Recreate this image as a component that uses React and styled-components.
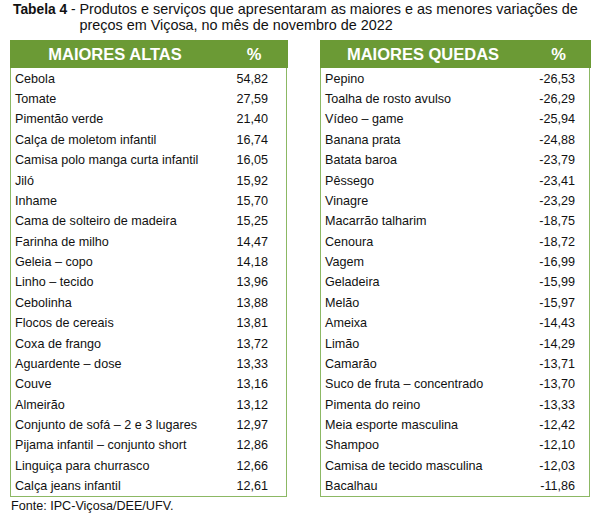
import React from 'react'
import styled, { createGlobalStyle } from 'styled-components'

const altas = [
  ['Cebola', '54,82'],
  ['Tomate', '27,59'],
  ['Pimentão verde', '21,40'],
  ['Calça de moletom infantil', '16,74'],
  ['Camisa polo manga curta infantil', '16,05'],
  ['Jiló', '15,92'],
  ['Inhame', '15,70'],
  ['Cama de solteiro de madeira', '15,25'],
  ['Farinha de milho', '14,47'],
  ['Geleia – copo', '14,18'],
  ['Linho – tecido', '13,96'],
  ['Cebolinha', '13,88'],
  ['Flocos de cereais', '13,81'],
  ['Coxa de frango', '13,72'],
  ['Aguardente – dose', '13,33'],
  ['Couve', '13,16'],
  ['Almeirão', '13,12'],
  ['Conjunto de sofá – 2 e 3 lugares', '12,97'],
  ['Pijama infantil – conjunto short', '12,86'],
  ['Linguiça para churrasco', '12,66'],
  ['Calça jeans infantil', '12,61']
]

const quedas = [
  ['Pepino', '-26,53'],
  ['Toalha de rosto avulso', '-26,29'],
  ['Vídeo – game', '-25,94'],
  ['Banana prata', '-24,88'],
  ['Batata baroa', '-23,79'],
  ['Pêssego', '-23,41'],
  ['Vinagre', '-23,29'],
  ['Macarrão talharim', '-18,75'],
  ['Cenoura', '-18,72'],
  ['Vagem', '-16,99'],
  ['Geladeira', '-15,99'],
  ['Melão', '-15,97'],
  ['Ameixa', '-14,43'],
  ['Limão', '-14,29'],
  ['Camarão', '-13,71'],
  ['Suco de fruta – concentrado', '-13,70'],
  ['Pimenta do reino', '-13,33'],
  ['Meia esporte masculina', '-12,42'],
  ['Shampoo', '-12,10'],
  ['Camisa de tecido masculina', '-12,03'],
  ['Bacalhau', '-11,86']
]

const GlobalStyle = createGlobalStyle`
  body {
    margin: 0;
    background: #ffffff;
    font-family: 'Liberation Sans', Arial, sans-serif;
    color: #000000;
  }
`

const Page = styled.div`
  width: 593px;
  height: 516px;
  padding: 2px 0 0 13px;
  box-sizing: border-box;
`

const Caption = styled.div`
  display: flex;
  align-items: baseline;
  font-size: 14.4px;
  line-height: 15.5px;
  color: #111;
  width: 578px;
`

const CaptionLabel = styled.span`
  white-space: pre;
  font-size: 13.8px;
  b {
    font-weight: 700;
  }
`

const Tables = styled.div`
  display: flex;
  margin-top: 7px;
  margin-left: -3px;
`

const Table = styled.div`
  width: ${p => p.$width}px;
  margin-left: ${p => p.$offset || 0}px;
  border: 1.5px solid #8cb864;
  border-top: none;
  box-sizing: border-box;
`

const Head = styled.div`
  display: grid;
  grid-template-columns: 1fr ${p => p.$col}px;
  height: 28px;
  align-items: center;
  background: #6b9a35;
  color: #ffffff;
  font-weight: 700;
  font-size: 16.5px;
  margin: 0 -1.5px;
  text-align: center;
`

const Row = styled.div`
  display: grid;
  grid-template-columns: 1fr ${p => p.$col}px;
  height: 20.38px;
  align-items: center;
  font-size: 12.6px;
  color: #111;
  padding-top: 1px;
  box-sizing: border-box;
`

const Name = styled.span`
  padding-left: 4px;
  white-space: nowrap;
`

const Value = styled.span`
  text-align: right;
  padding-right: ${p => p.$pad}px;
`

const Source = styled.div`
  font-size: 12.6px;
  color: #111;
  margin-top: 2px;
  margin-left: -2px;
`

function DataTable ({ title, rows, width, col, pad, offset }) {
  return (
    <Table $width={width} $offset={offset}>
      <Head $col={col}>
        <span>{title}</span>
        <span>%</span>
      </Head>
      {rows.map(([name, value]) => (
        <Row key={name} $col={col}>
          <Name>{name}</Name>
          <Value $pad={pad}>{value}</Value>
        </Row>
      ))}
    </Table>
  )
}

export default function App () {
  return (
    <Page>
      <GlobalStyle />
      <Caption>
        <CaptionLabel><b>Tabela 4</b> - </CaptionLabel>
        <span>Produtos e serviços que apresentaram as maiores e as menores variações de preços em Viçosa, no mês de novembro de 2022</span>
      </Caption>
      <Tables>
        <DataTable title='MAIORES ALTAS' rows={altas} width={277} col={67} pad={18} />
        <DataTable title='MAIORES QUEDAS' rows={quedas} width={270} col={64} pad={14} offset={33} />
      </Tables>
      <Source>Fonte: IPC-Viçosa/DEE/UFV.</Source>
    </Page>
  )
}
